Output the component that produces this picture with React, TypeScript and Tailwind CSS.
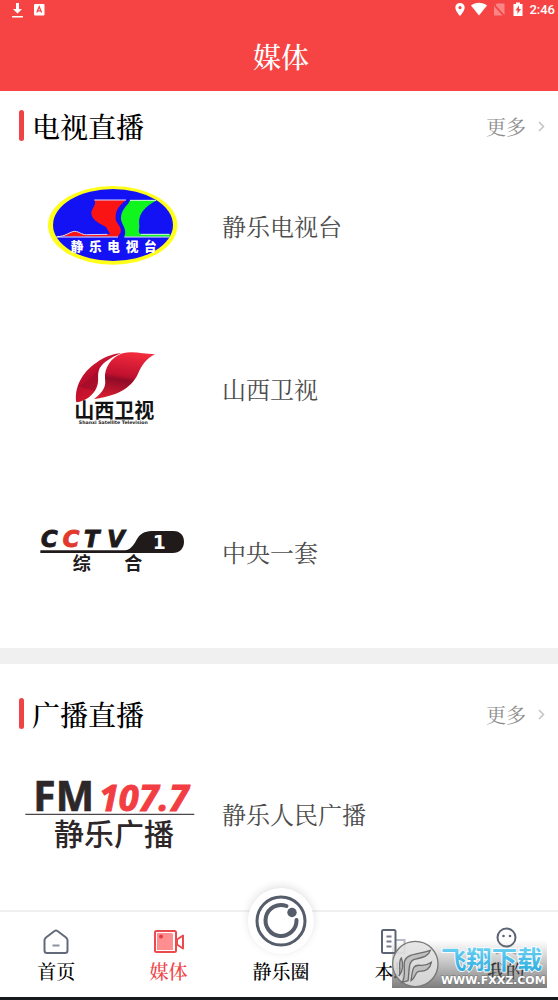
import React from "react";

const serif =
  "font-['Noto_Serif_CJK_SC','Source_Han_Serif_SC','Liberation_Serif','Noto_Sans_CJK_SC',serif]";
const logoSize = "h-[110px] w-[190px]";
const sansCjk = "'Noto Sans CJK SC', sans-serif";

const stationGlyphs = [
  { char: "静", x: 141 },
  { char: "乐", x: 196 },
  { char: "电", x: 251 },
  { char: "视", x: 306 },
  { char: "台", x: 361 },
];

function JingleTvLogo() {
  return (
    <svg className={logoSize} viewBox="-42 -10 570 330" role="img" aria-label="静乐电视台">
      <ellipse cx="248" cy="153" rx="194" ry="118" fill="#ffff1a" />
      <ellipse cx="249" cy="152" rx="180" ry="108" fill="#1212f5" />
      <path d="M80 186 C108 186 118 172 134 171 C150 172 152 181 170 181 L240 179 L228 158 C210 148 188 140 184 119 C183 101 202 91 193 77 L288 77 C270 92 257 105 257 127 C254 148 276 151 272 174 L264 187 Z" fill="#fb1414" />
      <path d="M80 187 C108 187 118 172 134 171 C150 172 152 181 170 181 L232 180 M193 77 H288" fill="none" stroke="#d8d8ff" strokeWidth="3" />
      <path d="M300 78 H381 C350 94 326 115 327 146 C331 163 321 171 332 180 L420 180 V187 H283 C294 160 270 150 273 127 C276 102 294 94 300 78 Z" fill="#10f51e" />
      <path d="M300 78 H378 M332 180 H418" fill="none" stroke="#d8ffd8" strokeWidth="3" />
      <path d="M80 188 H264 M283 188 H418" stroke="#e9e9ff" strokeWidth="3" />
      {stationGlyphs.map(({ char, x }) => (
        <text key={char} x={x} y="229" fill="#fff" fontSize="38" fontWeight="900" textAnchor="middle" fontFamily={sansCjk}>{char}</text>
      ))}
    </svg>
  );
}

function ShanxiLogo() {
  return (
    <svg className={logoSize} viewBox="-102 -2 570 330" role="img" aria-label="山西卫视">
      <defs>
        <linearGradient id="leafLeft" x1="0" y1="0" x2="0.5" y2="1">
          <stop offset="0" stopColor="#ef2a3c" />
          <stop offset="0.5" stopColor="#b80c2c" />
          <stop offset="1" stopColor="#d81a2c" />
        </linearGradient>
        <linearGradient id="leafRight" x1="0.6" y1="0" x2="0.4" y2="1">
          <stop offset="0" stopColor="#f22b3d" />
          <stop offset="0.5" stopColor="#c0102f" />
          <stop offset="0.6" stopColor="#900b26" />
          <stop offset="1" stopColor="#d51d32" />
        </linearGradient>
      </defs>
      <path d="M79 203 C72 160 96 112 139 84 C164 66 187 58 214 55 C184 68 160 82 149 101 C139 122 150 139 139 161 C130 181 107 200 79 203 Z" fill="url(#leafLeft)" />
      <path d="M132 193 C163 170 168 153 165 133 C162 100 184 67 218 56 C249 48 278 58 315 59 C287 73 276 91 264 117 C242 165 195 184 132 193 Z" fill="url(#leafRight)" />
      <path d="M84 155 C106 145 125 130 145 110 C139 132 149 143 132 168 C113 164 98 159 84 155 Z" fill="#8f0b28" opacity="0.5" />
      <text x="193" y="250" fill="#121212" fontSize="60" fontWeight="700" textAnchor="middle" fontFamily={sansCjk}>山西卫视</text>
      <text x="190" y="269" fill="#222" fontSize="14" fontWeight="700" textAnchor="middle" fontFamily="'DejaVu Sans', sans-serif">Shanxi Satellite Television</text>
    </svg>
  );
}

const cctvGlyphs = [
  { char: "C", x: 33, color: "#211a1b" },
  { char: "C", x: 98, color: "#e2392d" },
  { char: "T", x: 162, color: "#211a1b" },
  { char: "V", x: 232, color: "#211a1b" },
];

function CctvLogo() {
  return (
    <svg className={logoSize} viewBox="-42 -38 570 330" role="img" aria-label="CCTV 1 综合">
      <path d="M31 122 H286 C306 118 313 102 323 85 C335 68 350 64 372 64 H430 C452 64 462 79 462 96 C462 116 449 130 428 130 H31 Z" fill="#211a1b" />
      {cctvGlyphs.map(({ char, x, color }) => (
        <text key={x} x={x} y="113" fontSize="68" fontWeight="700" fontStyle="italic" fontFamily="'DejaVu Sans', sans-serif" fill={color} stroke={color} strokeWidth="3">{char}</text>
      ))}
      <text x="388" y="117" fontSize="56" fontWeight="700" textAnchor="middle" fontFamily="'DejaVu Sans', sans-serif" fill="#fff">1</text>
      <text x="155" y="182" fontSize="54" fontWeight="700" textAnchor="middle" fontFamily={sansCjk} fill="#211a1b">综</text>
      <text x="310" y="182" fontSize="54" fontWeight="700" textAnchor="middle" fontFamily={sansCjk} fill="#211a1b">合</text>
    </svg>
  );
}

function RadioLogo() {
  return (
    <svg className={logoSize} viewBox="3 -16 570 330" role="img" aria-label="FM 107.7 静乐广播">
      <text x="55" y="141" fontSize="122" fontWeight="700" fontFamily="'Open Sans', sans-serif" fill="#2d2729" stroke="#2d2729" strokeWidth="2">FM</text>
      <text x="252" y="140" fontSize="108" fontWeight="700" fontStyle="italic" fontFamily="'Open Sans', sans-serif" fill="#f23d43" stroke="#f23d43" strokeWidth="3">107.7</text>
      <path d="M31 150 H538" stroke="#4c484a" strokeWidth="4" />
      <text x="297" y="242" fontSize="90" fontWeight="500" textAnchor="middle" fontFamily={sansCjk} fill="#2d2729">静乐广播</text>
    </svg>
  );
}

function StatusBar() {
  return (
    <div className="flex h-5 items-center justify-between pr-[3px] pl-[11px] text-white">
      <div className="flex items-center gap-[10px]">
        <svg className="h-4 w-3" viewBox="0 0 12 16" aria-hidden="true">
          <path d="M5 1h3v6h3l-4.500 4.500L2 7h3zM1 14h11v1.500H1z" fill="currentColor" />
        </svg>
        <svg className="h-3 w-3" viewBox="0 0 12 12" aria-hidden="true">
          <rect x="1" y="0" width="10.500" height="11.500" rx="1" fill="currentColor" />
          <path d="M3.800 8.500 6.200 2.800 8.600 8.500M4.800 6.800h2.900" fill="none" stroke="#f64444" strokeWidth="1.300" />
        </svg>
      </div>
      <div className="flex items-center gap-[6px]">
        <svg className="h-4 w-[10px]" viewBox="0 0 10 16" aria-hidden="true">
          <path fillRule="evenodd" d="M5 1C2.200 1 .3 3 .3 5.500.3 9 5 14 5 14s4.700-5 4.700-8.500C9.700 3 7.800 1 5 1Zm0 3a1.600 1.600 0 1 1 0 3.200A1.600 1.600 0 0 1 5 4Z" fill="currentColor" />
        </svg>
        <svg className="h-4 w-4" viewBox="0 0 16 16" aria-hidden="true">
          <path d="M0 3.500C4.500-.2 11.500-.2 16 3.500L8 13.500Z" fill="currentColor" />
        </svg>
        <svg className="h-4 w-3" viewBox="0 0 12 16" aria-hidden="true">
          <path d="M4 1.500h7.500V13L2.500 3ZM1 4l8.500 9.500H1Z" fill="currentColor" opacity="0.350" />
        </svg>
        <svg className="ml-[2px] h-4 w-[10px]" viewBox="0 0 10 16" aria-hidden="true">
          <path d="M3 .5h4V2h2.500v12H.5V2H3z" fill="currentColor" />
          <path d="M6 3.500 2.500 8.500h2V12L8 7H6z" fill="#f64444" />
        </svg>
        <span className="font-[Roboto,sans-serif] text-[13px] leading-4 font-medium">2:46</span>
      </div>
    </div>
  );
}

function SectionHeader({ title }: { title: string }) {
  return (
    <div className="flex h-[31px] items-center pr-[10px] pl-[19px]">
      <span className="h-[31px] w-[5px] rounded-sm bg-[#f04343]" />
      <h2 className="ml-2 flex-1 pt-[2px] text-[28px] leading-[31px] font-medium text-black">{title}</h2>
      <a href="#more" className="flex items-center gap-2 pt-[2px] text-[20px] leading-[31px] text-[#8c8c8c]">
        更多
        <svg className="h-3 w-[14px]" viewBox="0 0 14 12" aria-hidden="true">
          <path d="m5 1 4.500 4.500L5 10" fill="none" stroke="#c3c3c3" strokeWidth="1.500" />
        </svg>
      </a>
    </div>
  );
}

function ChannelRow({ name, logo }: { name: string; logo: React.ReactNode }) {
  return (
    <li>
      <a href="#channel" className="flex h-[163px] items-center text-[#4c4c4c]">
        <span className="flex w-[222px] shrink-0 justify-center">{logo}</span>
        <span className="text-[24px] leading-8">{name}</span>
      </a>
    </li>
  );
}

const iconClass = "h-7 w-[30px]";

function HomeIcon() {
  return (
    <svg className={iconClass} viewBox="0 0 30 28" fill="none" aria-hidden="true">
      <path d="M5 10.500 13.500 4Q15 3 16.500 4L25 10.500Q26.500 12 26.500 13V23.500Q26.500 26 24 26H6Q3.500 26 3.500 23.500V13Q3.500 12 5 10.500Z" stroke="#626a79" strokeWidth="2" />
      <path d="M11.500 18.500h7" stroke="#8b9099" strokeWidth="2" />
    </svg>
  );
}

function MediaIcon() {
  return (
    <svg className={iconClass} viewBox="0 0 30 28" fill="none" aria-hidden="true">
      <rect x="1" y="4" width="21" height="21" rx="1.500" stroke="#ea4b4e" strokeWidth="2" />
      <path d="M3 6h14q2 0 2 2v15H3z" fill="#ff8e91" />
      <circle cx="7" cy="9.500" r="2" fill="#e43c42" />
      <path d="m23 12.500 6-4v13l-6-4Z" stroke="#ea4b4e" strokeWidth="2" strokeLinejoin="round" />
    </svg>
  );
}

function LocalIcon() {
  return (
    <svg className={iconClass} viewBox="0 0 30 28" fill="none" aria-hidden="true">
      <path d="M17 13h9.500v13H17" stroke="#b7bac4" strokeWidth="2" />
      <rect x="4" y="3" width="13.500" height="23" rx="1.500" stroke="#5d6475" strokeWidth="2" />
      <path d="M8.500 9.500h5M8.500 14.500h5M8.500 19.500h5" stroke="#747b89" strokeWidth="2" />
    </svg>
  );
}

function ProfileIcon() {
  return (
    <svg className={iconClass} viewBox="0 0 30 28" fill="none" aria-hidden="true">
      <circle cx="15.500" cy="10.500" r="9" stroke="#5d6475" strokeWidth="2" />
      <circle cx="12.500" cy="9" r="1.300" fill="#5d6475" />
      <circle cx="19" cy="9" r="1.300" fill="#5d6475" />
      <path d="M5 27q10-7 20 0" stroke="#b7bac4" strokeWidth="2" />
    </svg>
  );
}

function CircleIcon() {
  return (
    <svg className="h-[52px] w-[52px]" viewBox="0 0 52 52" fill="none" aria-hidden="true">
      <circle cx="26" cy="26" r="24" stroke="#555c6a" strokeWidth="3" />
      <path d="M31.500 11A15.500 15.500 0 1 0 41.500 25" stroke="#555c6a" strokeWidth="4" strokeLinecap="round" />
      <circle cx="37" cy="17.500" r="4.700" fill="#555c6a" />
    </svg>
  );
}

function Watermark() {
  return (
    <svg className="pointer-events-none absolute right-[11px] bottom-[9px] h-12 w-[155px]" viewBox="66 120 465 144" aria-hidden="true">
      <defs>
        <linearGradient id="shade" x1="0" y1="0" x2="0" y2="1">
          <stop offset="0" stopColor="#777" stopOpacity="0" />
          <stop offset="1" stopColor="#666" stopOpacity="0.850" />
        </linearGradient>
        <linearGradient id="sky" x1="0" y1="0" x2="0" y2="1">
          <stop offset="0" stopColor="#7edcf8" />
          <stop offset="1" stopColor="#25a6dc" />
        </linearGradient>
      </defs>
      <rect x="66" y="120" width="465" height="144" fill="url(#shade)" />
      <circle cx="136" cy="192" r="68" fill="#e2e2e2" fillOpacity="0.850" stroke="#777" strokeWidth="4" />
      <path d="M96 247 C108 233 101 203 103 187 C108 159 142 165 181 151 C174 174 149 173 131 179 C112 188 119 220 114 242 Z M123 242 C129 207 126 194 151 196 Q169 198 184 187 C180 211 160 214 147 214 C133 216 138 235 123 242 Z M87 228 C94 212 83 187 94 174 C101 190 99 214 87 228 Z" fill="#c0c0c0" stroke="#6d6d6d" strokeWidth="4" />
      <text x="365" y="206" textAnchor="middle" fontSize="76" fontWeight="700" fontFamily={sansCjk} fill="url(#sky)" stroke="#fff" strokeWidth="5" paintOrder="stroke">飞翔下载</text>
      <text x="370" y="252" textAnchor="middle" fontSize="33" fontWeight="700" fontFamily="'DejaVu Sans', sans-serif" fill="#fff" stroke="#777" strokeWidth="3" paintOrder="stroke">WWW.FXXZ.COM</text>
    </svg>
  );
}

const tabs = [
  { label: "首页", icon: <HomeIcon /> },
  { label: "媒体", icon: <MediaIcon />, active: true },
  { label: "静乐圈", icon: null },
  { label: "本地", icon: <LocalIcon /> },
  { label: "我的", icon: <ProfileIcon /> },
];

function TabBar() {
  return (
    <footer className="sticky bottom-0 mt-auto border-b-[3px] border-[#15191c] bg-white">
      <nav className="-mr-1 flex border-t-2 border-[#f0f0f0]">
        {tabs.map((tab) => (
          <button
            key={tab.label}
            type="button"
            className={`relative flex flex-1 basis-0 flex-col items-center pt-[15px] pb-[14px] ${tab.active ? "text-[#ee4548]" : "text-black"}`}
          >
            {tab.icon ?? (
              <>
                <span className="h-7" />
                <span className="absolute -top-6 flex h-[66px] w-[66px] items-center justify-center rounded-full bg-white shadow-[0_-2px_8px_rgba(0,0,0,0.12)]">
                  <CircleIcon />
                </span>
              </>
            )}
            <span className="relative mt-1 text-[19px] leading-6 font-medium">{tab.label}</span>
          </button>
        ))}
      </nav>
      <Watermark />
    </footer>
  );
}

export default function App() {
  return (
    <div className={`flex min-h-screen flex-col overflow-x-clip bg-white ${serif}`}>
      <header className="bg-[#f64444]">
        <StatusBar />
        <h1 className="pt-4 pb-[15px] pl-1 text-center text-[28px] leading-10 font-medium text-white">媒体</h1>
      </header>
      <main>
        <section className="pt-[19px] pb-[15px]">
          <SectionHeader title="电视直播" />
          <ul className="pt-[3px]">
            <ChannelRow name="静乐电视台" logo={<JingleTvLogo />} />
            <ChannelRow name="山西卫视" logo={<ShanxiLogo />} />
            <ChannelRow name="中央一套" logo={<CctvLogo />} />
          </ul>
        </section>
        <section className="border-t-16 border-[#f0f0f0] pt-[34px]">
          <SectionHeader title="广播直播" />
          <ul className="pt-[3px]">
            <ChannelRow name="静乐人民广播" logo={<RadioLogo />} />
          </ul>
        </section>
      </main>
      <TabBar />
    </div>
  );
}
